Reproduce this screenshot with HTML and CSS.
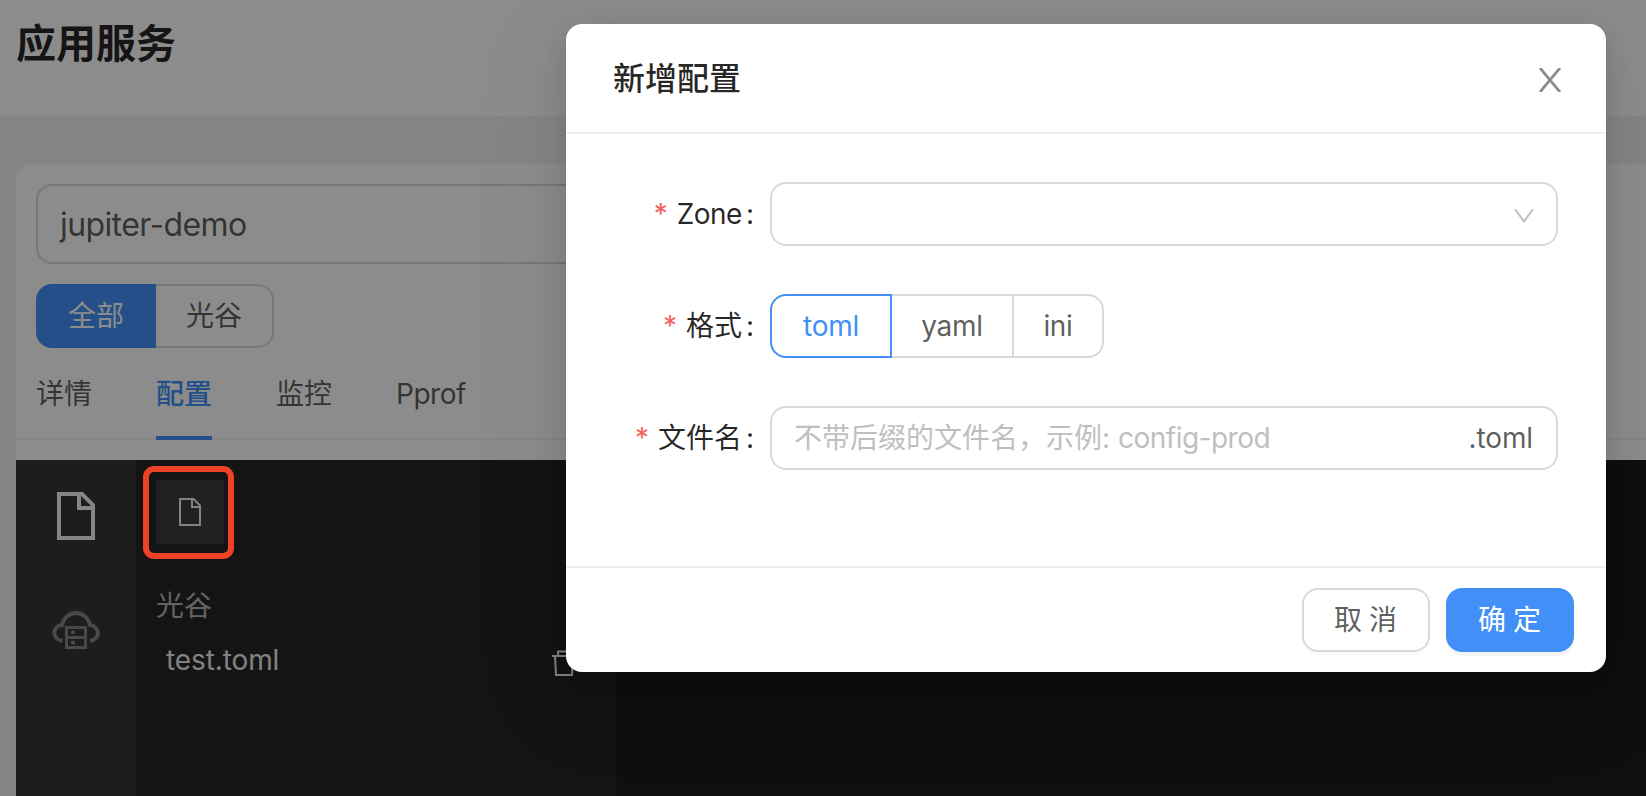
FILE: index.html
```html
<!DOCTYPE html>
<html lang="zh-CN">
<head>
<meta charset="utf-8">
<title>应用服务</title>
<link rel="stylesheet" href="styles.css">
</head>
<body>
<div class="page">
  <header class="page-header"><h1 class="page-title">应用服务</h1></header>
  <main class="card">
    <div class="toolbar">
      <div class="app-select">jupiter-demo</div>
      <div class="zones"><span class="zone zone-active">全部</span><span class="zone">光谷</span></div>
    </div>
    <nav class="tabs">
      <span class="tab">详情</span><span class="tab tab-active">配置</span><span class="tab">监控</span><span class="tab latin">Pprof</span>
    </nav>
    <section class="workspace">
      <aside class="rail">
        <svg class="rail-file" viewBox="0 0 38 48"><path d="M2 2H25L36 13V46H2ZM22 2V16H36" /></svg>
        <svg class="rail-cloud" viewBox="0 0 48 38"><path d="M10.5 30C-1 28 .5 15 10 14C14-2 34-2 38 14C48 16 49 28 38 30" stroke-width="4"/><path class="rail-server" d="M14.5 16.500H33.500V36.500H14.500ZM14.500 26.500H33.500" stroke-width="3"/><path d="M19 21.500H23M19 31.500H23" stroke-width="3.500"/></svg>
      </aside>
      <div class="files">
        <div class="new-file"><svg viewBox="0 0 22 28"><path d="M1 1H14.500L21 7.500V27H1ZM13 1V9H21"/></svg></div>
        <div class="folder">光谷</div>
        <div class="file"><span>test.toml</span>
          <svg class="trash" viewBox="0 0 24 26"><path d="M0 6H24M6 6V1.500H18V6M3 6L4 25H20L21 6"/></svg>
        </div>
      </div>
      <div class="editor"></div>
    </section>
  </main>
</div>
<div class="mask"></div>
<div class="highlight"></div>
<div class="modal">
  <div class="modal-header"><span class="modal-title">新增配置</span>
    <svg class="close" viewBox="0 0 22 24"><path d="M1 0L21 24M21 0L1 24"/></svg>
  </div>
  <div class="modal-body">
    <div class="row"><label class="label"><i>*</i><span class="latin">Zone</span><b>:</b></label>
      <div class="field field-select"><svg class="chevron" viewBox="0 0 20 14"><path d="M1 0L10 12.500L19 0"/></svg></div></div>
    <div class="row"><label class="label"><i>*</i><span>格式</span><b>:</b></label>
      <div class="formats"><span class="format format-active">toml</span><span class="format">yaml</span><span class="format format-last">ini</span></div></div>
    <div class="row"><label class="label"><i>*</i><span>文件名</span><b>:</b></label>
      <div class="field"><span class="placeholder">不带后缀的文件名，示例: <span class="latin">config-prod</span></span><span class="suffix">.toml</span></div></div>
  </div>
  <div class="modal-footer"><span class="btn">取 消</span><span class="btn btn-primary">确 定</span></div>
</div>
</body>
</html>
```
FILE: styles.css
```css
* { box-sizing: border-box; }
body {
  margin: 0; width: 1646px; height: 796px; overflow: hidden;
  background: #f0f2f5; color: rgba(0, 0, 0, .65);
  font: 28px/44px Inter, "Noto Sans CJK SC", sans-serif;
}
svg { fill: none; stroke: currentColor; stroke-width: 2; display: block; }
.page { height: 796px; display: flex; flex-direction: column; }
.page-header { height: 116px; padding: 12px 16px; background: #fff; flex: none; }
.page-title { margin: 0; font-size: 40px; line-height: 64px; font-weight: 600; color: rgba(0, 0, 0, .85); }
.card { margin: 48px 0 0 16px; height: 632px; background: #fff; border-radius: 16px 0 0 0; display: flex; flex-direction: column; }
.toolbar { padding: 20px 0 0 20px; display: grid; gap: 20px; }
.app-select { width: 800px; height: 80px; border: 2px solid #d9d9d9; border-radius: 16px; padding: 0 22px; font-size: 32px; line-height: 78px; letter-spacing: -.6px; }
.zones { display: flex; height: 64px; }
.zone { width: 118px; border: 2px solid #d9d9d9; border-left: 0; border-radius: 0 16px 16px 0; text-align: center; line-height: 60px; }
.zone-active { width: 120px; background: #4290f7; border-color: #4290f7; color: #fff; border-radius: 16px 0 0 16px; padding-left: 2px; }
.tabs { height: 92px; padding-left: 20px; display: flex; gap: 64px; border-bottom: 2px solid #f0f0f0; }
.tab { height: 92px; line-height: 92px; }
.tab-active { color: #4290f7; font-weight: 500; border-bottom: 4px solid #4290f7; }
.workspace { margin-top: 20px; flex: 1; display: flex; background: #1c1c1c; color: #fff; }
.rail { width: 120px; background: #353535; display: flex; flex-direction: column; align-items: center; padding-top: 32px; gap: 71px; }
.rail-file { width: 38px; height: 48px; stroke-width: 4; color: #f4f4f4; }
.rail-cloud { width: 48px; height: 38px; color: #858585; }
.rail-server { fill: #353535; }
.files { width: 480px; background: #252525; padding: 20px; }
.new-file { width: 68px; height: 64px; background: #3c3c3c; display: flex; align-items: center; justify-content: center; color: #f0f0f0; }
.new-file svg { width: 22px; height: 28px; }
.folder { margin-top: 40px; color: #b5b5b5; }
.file { display: flex; justify-content: space-between; align-items: center; margin-top: 10px; padding: 0 20px 0 10px; color: #ececec; letter-spacing: -.1px; }
.trash { width: 24px; height: 26px; margin-top: 6px; color: #ececec; }
.editor { flex: 1; }
.mask { position: absolute; inset: 0; background: rgba(0, 0, 0, .45); }
.highlight { position: absolute; left: 143px; top: 466px; width: 91px; height: 93px; border: 6px solid #ee4227; border-radius: 11px; }
.modal {
  position: absolute; left: 566px; top: 24px; width: 1040px; height: 648px;
  background: #fff; border-radius: 16px; display: flex; flex-direction: column;
  box-shadow: 0 12px 32px -16px rgba(0, 0, 0, .08), 0 18px 56px rgba(0, 0, 0, .05), 0 24px 96px 32px rgba(0, 0, 0, .03), 0 8px 24px rgba(0, 0, 0, .08);
}
.modal-header { height: 110px; padding: 0 45px 0 47px; border-bottom: 2px solid #f0f0f0; display: flex; align-items: center; justify-content: space-between; font-size: 32px; font-weight: 500; color: rgba(0, 0, 0, .85); }
.modal-title { padding-top: 2px; }
.close { width: 22px; height: 24px; margin-top: 4px; color: #8c8c8c; stroke-width: 2.800; }
.modal-body { flex: 1; padding: 48px; display: flex; flex-direction: column; gap: 48px; }
.row { display: flex; height: 64px; align-items: center; }
.label { width: 156px; padding-right: 16px; display: flex; justify-content: flex-end; color: rgba(0, 0, 0, .85); }
.label i { font-style: normal; color: #f26460; margin-right: 9px; }
.label b { font-weight: 400; margin-left: 4px; }
.latin { letter-spacing: -.5px; }
.field { width: 788px; height: 64px; border: 2px solid #d9d9d9; border-radius: 16px; padding: 0 22px; display: flex; align-items: center; justify-content: space-between; }
.field-select { justify-content: flex-end; }
.chevron { width: 20px; height: 14px; margin-top: 3px; color: #bfbfbf; }
.placeholder { color: #bfbfbf; }
.suffix { padding-right: 1px; letter-spacing: -.1px; }
.formats { display: flex; }
.format { height: 64px; width: 122px; border: 2px solid #d9d9d9; border-left: 0; text-align: center; line-height: 60px; letter-spacing: -.3px; }
.format-active { color: #4290f7; border: 2px solid #4290f7; border-radius: 16px 0 0 16px; }
.format-last { width: 90px; border-radius: 0 16px 16px 0; }
.modal-footer { height: 106px; border-top: 2px solid #f0f0f0; padding: 20px 32px; display: flex; justify-content: flex-end; gap: 16px; }
.btn { width: 128px; height: 64px; border: 2px solid #d9d9d9; border-radius: 16px; padding-right: 1px; text-align: center; line-height: 60px; box-shadow: 0 4px 0 rgba(0, 0, 0, .016); word-spacing: -.8px; }
.btn-primary { background: #4290f7; border-color: #4290f7; color: #fff; box-shadow: 0 4px 0 rgba(0, 0, 0, .04); }
```
